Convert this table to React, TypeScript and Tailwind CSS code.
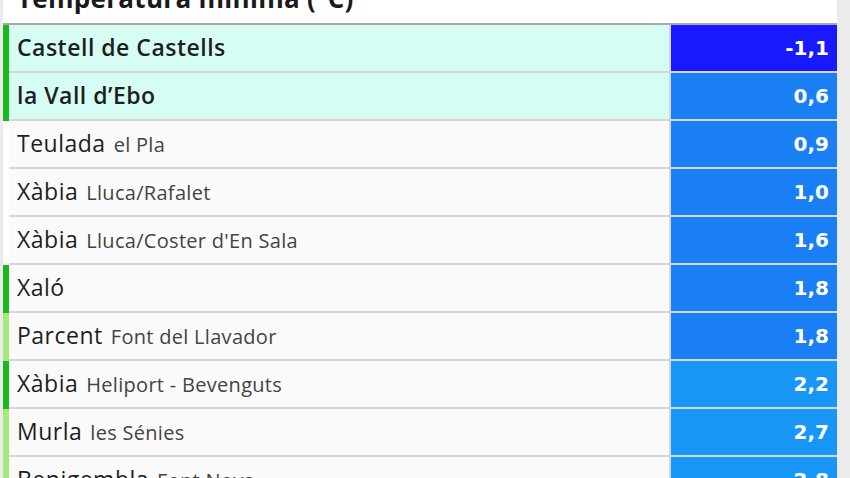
import React from "react";

type Row = {
  name: string;
  sub?: string;
  value: string;
  bar: "dark" | "light" | "none";
  highlight?: boolean;
  valueBg: string;
};

const rows: Row[] = [
  { name: "Castell de Castells", value: "-1,1", bar: "dark", highlight: true, valueBg: "bg-[#1919fe]" },
  { name: "la Vall d\u2019Ebo", value: "0,6", bar: "dark", highlight: true, valueBg: "bg-[#1a7ef5]" },
  { name: "Teulada", sub: "el Pla", value: "0,9", bar: "none", valueBg: "bg-[#1a7ef5]" },
  { name: "X\u00e0bia", sub: "Lluca/Rafalet", value: "1,0", bar: "none", valueBg: "bg-[#1a7ef5]" },
  { name: "X\u00e0bia", sub: "Lluca/Coster d'En Sala", value: "1,6", bar: "none", valueBg: "bg-[#1a7ef5]" },
  { name: "Xal\u00f3", value: "1,8", bar: "dark", valueBg: "bg-[#1a7ef5]" },
  { name: "Parcent", sub: "Font del Llavador", value: "1,8", bar: "light", valueBg: "bg-[#1a7ef5]" },
  { name: "X\u00e0bia", sub: "Heliport - Bevenguts", value: "2,2", bar: "dark", valueBg: "bg-[#1896f6]" },
  { name: "Murla", sub: "les S\u00e9nies", value: "2,7", bar: "light", valueBg: "bg-[#1896f6]" },
  { name: "Benigembla", sub: "Font Nova", value: "2,8", bar: "light", valueBg: "bg-[#1896f6]" },
];

export default function App() {
  return (
    <div className="w-[850px] h-[478px] overflow-hidden bg-[#ebebeb] pl-[3px] pr-[13px]" style={{ fontFamily: "'Open Sans', 'Noto Sans', sans-serif" }}>
      <div className="bg-white flex flex-col">
        <div className="h-[23px] pl-[14px] flex flex-col">
          <div className="mt-[-15px] text-[26px] leading-[26px] tracking-[0.3px] font-bold text-[#1a1a1a] whitespace-nowrap">
            Temperatura mínima (°C)
          </div>
        </div>
        <div className="h-[2px] bg-[#a8a8a8]" />
        {rows.map((r, i) => (
          <div key={i} className="flex h-[48px]">
            <div
              className={
                "w-[6px] shrink-0 " +
                (r.bar === "dark" ? "bg-[#19b91c]" : r.bar === "light" ? "bg-[#a6e87c]" : "bg-white")
              }
            />
            <div
              className={
                "flex-1 flex items-center pl-[8px] border-b-2 border-[#d6d6d6] whitespace-nowrap " +
                (r.highlight ? "bg-[#d5fdf4]" : "bg-[#fafafa]")
              }
            >
              <div className="leading-[30px]">
                <span
                  className={
                    "text-[23px] tracking-[0.5px] text-[#1e1e1e] " + (r.highlight ? "font-semibold" : "font-normal")
                  }
                >
                  {r.name}
                </span>
                {r.sub && (
                  <span className="ml-[8px] text-[20px] tracking-[0.3px] text-[#444]">{r.sub}</span>
                )}
              </div>
            </div>
            <div
              className={
                "w-[168px] shrink-0 flex items-center justify-end pr-[8px] border-l-2 border-b-2 border-[#d6d6d6] text-white font-bold text-[20px] " +
                r.valueBg
              }
              style={{ fontFamily: "'DejaVu Sans', Verdana, sans-serif" }}
            >
              {r.value}
            </div>
          </div>
        ))}
      </div>
    </div>
  );
}
